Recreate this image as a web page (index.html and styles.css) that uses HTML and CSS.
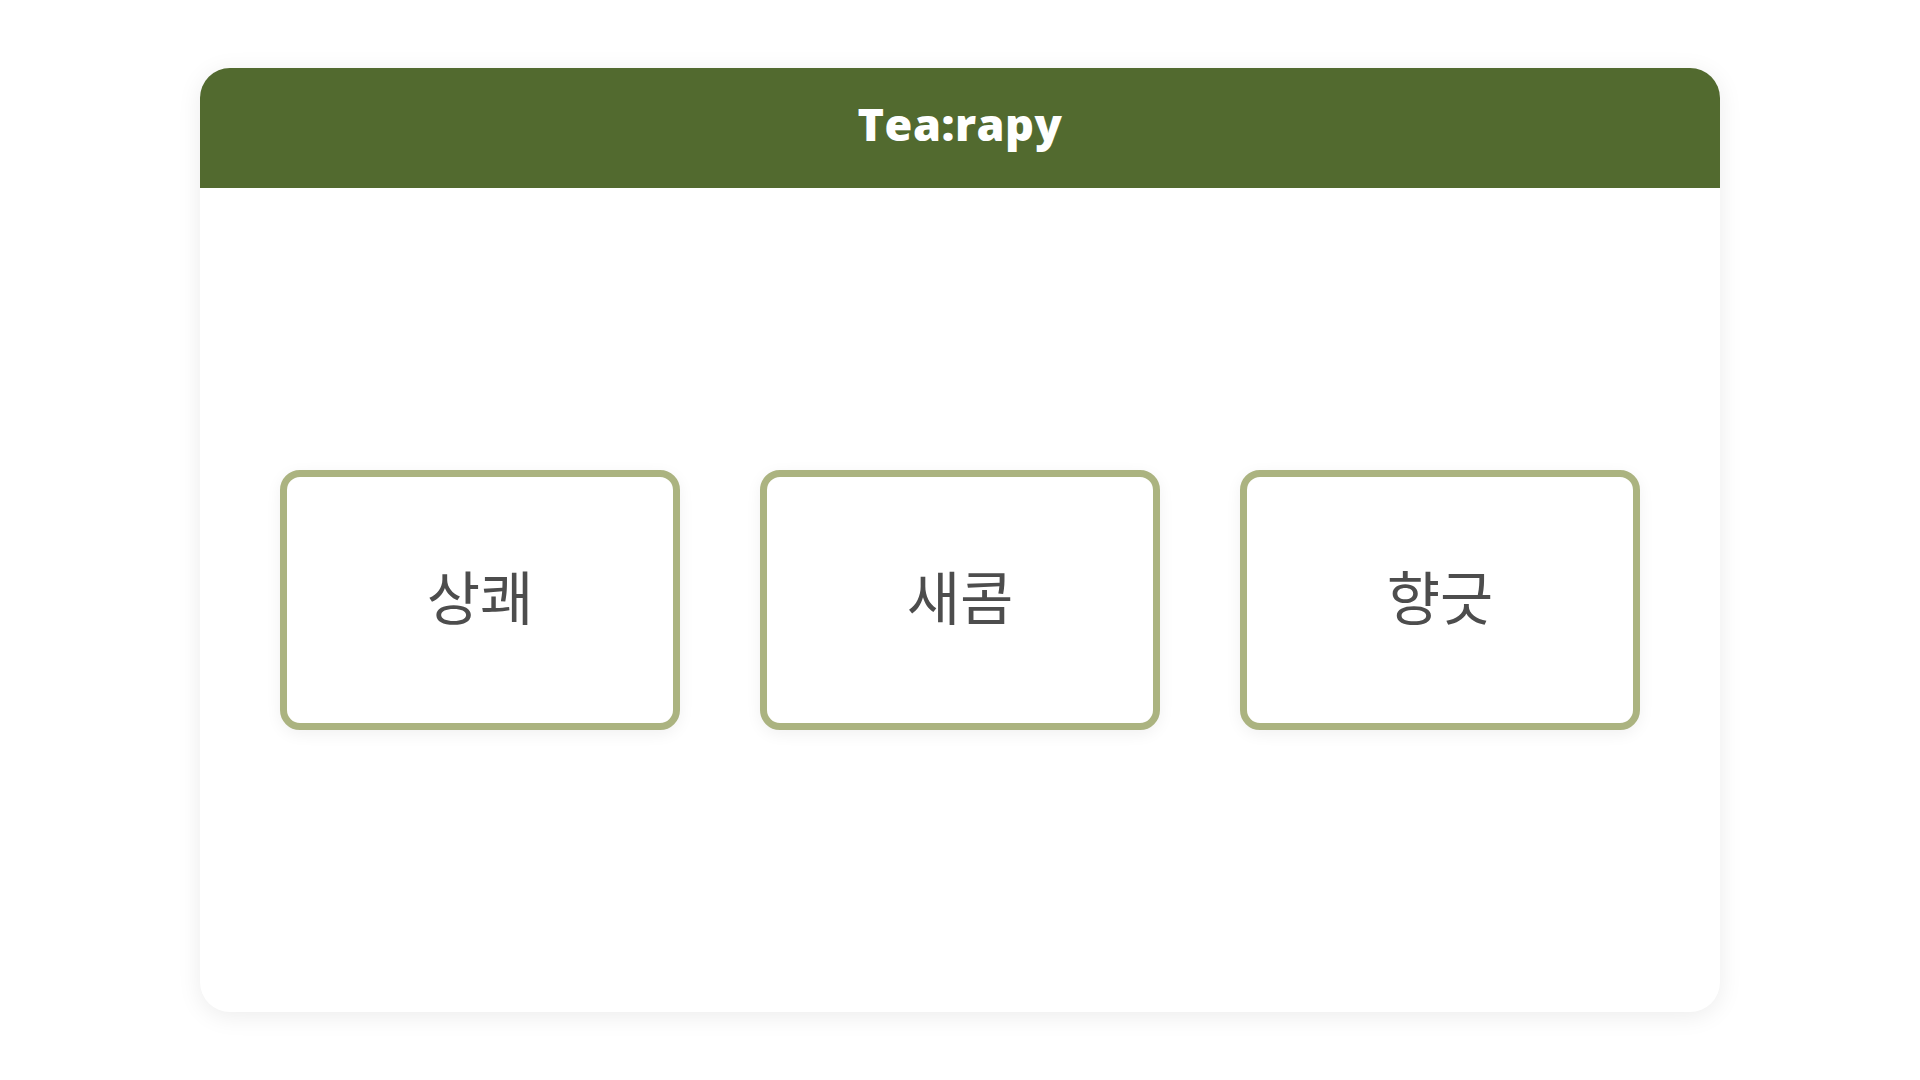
FILE: index.html
```html
<!DOCTYPE html>
<html lang="ko">
<head>
	<meta charset="UTF-8">
	<title>Tea:rapy</title>
	<link rel="stylesheet" href="styles.css">
</head>
<body>
	<div class="page">
		<div class="card">
			<div class="card-header">
				<h1 class="logo">Tea:rapy</h1>
			</div>
			<div class="card-body">
				<div class="choices">
					<a href="javascript:;" class="choice">상쾌</a>
					<a href="javascript:;" class="choice">새콤</a>
					<a href="javascript:;" class="choice">향긋</a>
				</div>
			</div>
		</div>
	</div>
</body>
</html>
```

FILE: styles.css
```css
* {
	margin: 0;
	padding: 0;
	box-sizing: border-box;
	text-decoration: none;
}
html, body {
	width: 100%;
	height: 100%;
}
body {
	background: #fff;
	font-family: "Noto Sans CJK KR", "Noto Sans", sans-serif;
}
.page {
	height: 100%;
	padding: 68px 200px;
}
.card {
	height: 100%;
	display: flex;
	flex-direction: column;
	background: #fff;
	border-radius: 30px;
	overflow: hidden;
	box-shadow: 0 4px 24px rgba(0, 0, 0, .08);
}
.card-header {
	height: 120px;
	flex: none;
	display: flex;
	align-items: center;
	justify-content: center;
	padding-bottom: 9px;
	background: #526a2f;
}
.logo {
	color: #fff;
	font-family: "Open Sans", "Noto Sans", sans-serif;
	font-size: 45px;
	font-weight: 800;
	line-height: 1;
	letter-spacing: 0.5px;
}
.card-body {
	flex: 1;
	display: flex;
	align-items: center;
	justify-content: center;
}
.choices {
	display: flex;
	gap: 80px;
}
.choice {
	width: 400px;
	height: 260px;
	display: flex;
	align-items: center;
	justify-content: center;
	padding-bottom: 10px;
	border: 7px solid #abb380;
	border-radius: 20px;
	background: #fff;
	box-shadow: 0 4px 16px rgba(0, 0, 0, .06);
	color: #4d4d4d;
	font-size: 58px;
	font-weight: 400;
	line-height: 1;
}
```
